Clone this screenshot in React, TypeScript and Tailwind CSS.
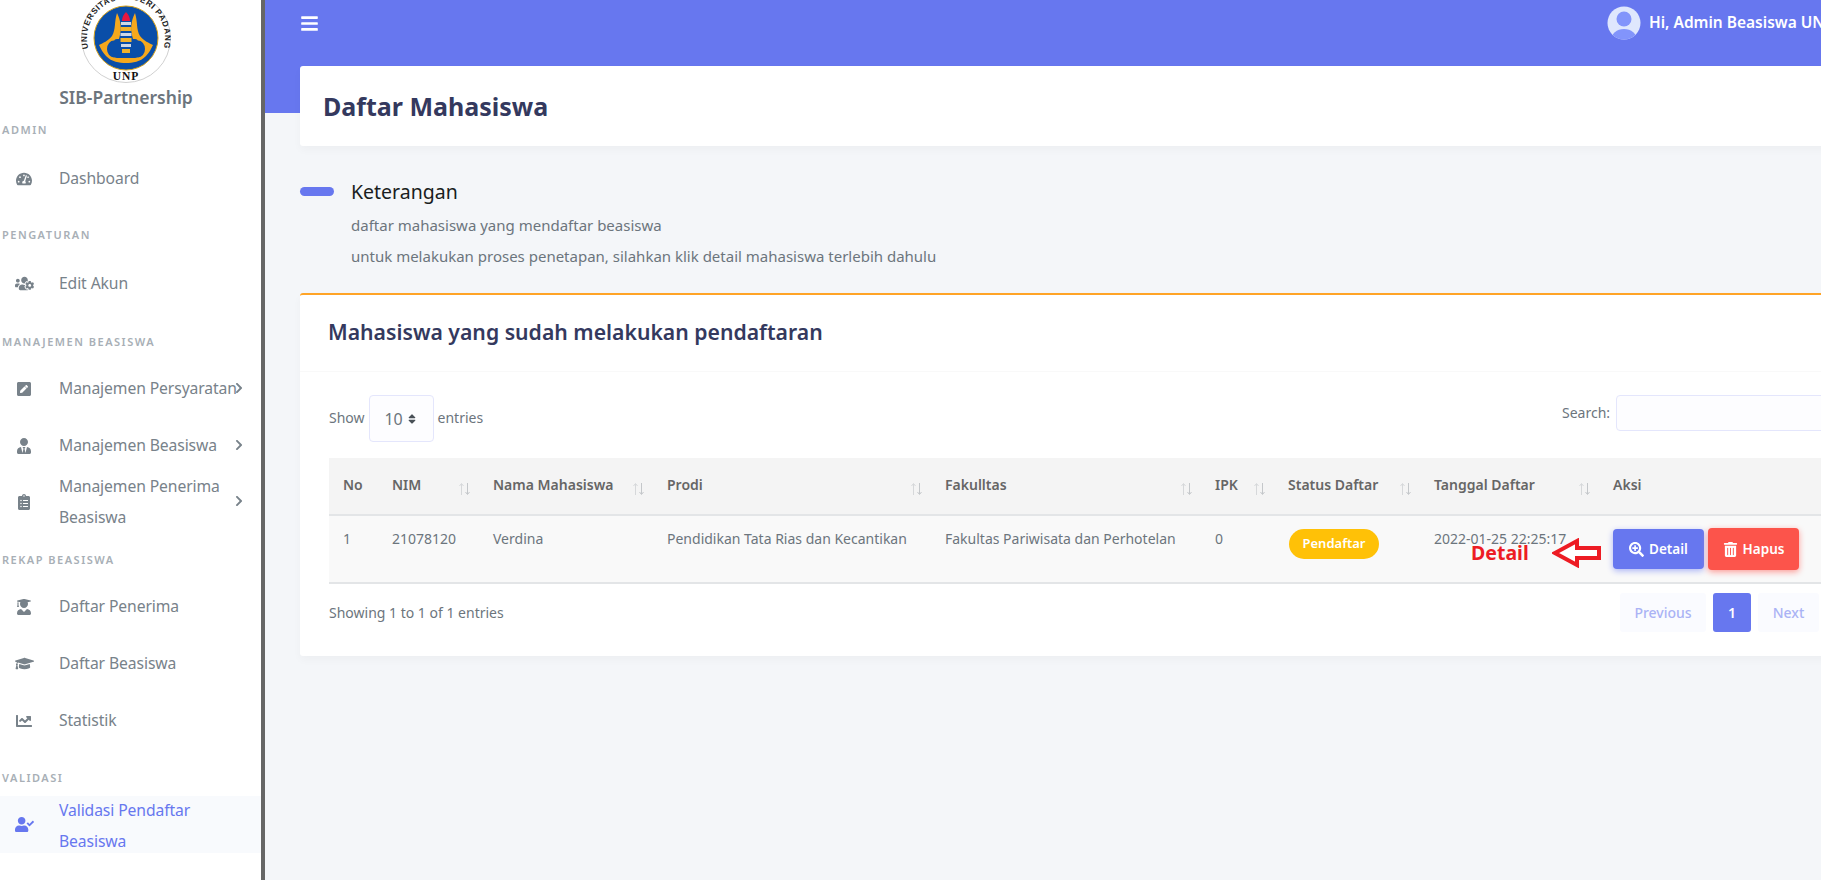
import React from 'react';
import {
  FaBars,
  FaChartLine,
  FaChevronRight,
  FaClipboardList,
  FaGraduationCap,
  FaPenSquare,
  FaSearchPlus,
  FaSort,
  FaTachometerAlt,
  FaTrashAlt,
  FaUserCheck,
  FaUserGraduate,
  FaUsersCog,
  FaUserTie,
} from 'react-icons/fa';

const font = "font-['Noto_Sans','Open_Sans',sans-serif]";

/* ---------- drawings ---------- */

const UnpLogo = () => (
  <svg width="90" height="90" viewBox="0 0 90 90" className="-mt-[7px] block shrink-0">
    <defs>
      <path id="ring-top" d="M12 66a39 39 0 1 1 66 0" />
    </defs>
    <circle cx="45" cy="45" r="44.5" fill="#fff" stroke="#c4c4c4" strokeWidth="0.8" />
    <circle cx="45" cy="45" r="32" fill="#0a4ea8" />
    <circle cx="45" cy="45" r="32" fill="none" stroke="#d8a21a" strokeWidth="1" />
    <text fontFamily="'Liberation Sans', sans-serif" fontSize="8.2" fontWeight="700" fill="#222" letterSpacing="0.7">
      <textPath href="#ring-top" startOffset="50%" textAnchor="middle">
        UNIVERSITAS NEGERI PADANG
      </textPath>
    </text>
    <text x="45" y="87" textAnchor="middle" fontFamily="'Liberation Serif', serif" fontSize="11.5" fontWeight="700" fill="#111" letterSpacing="1">
      UNP
    </text>
    {/* flames */}
    <path
      d="M36 20C33 30 35 36 31 43 27 48 22 50 18 52 20 56 22 60 25 63 31 69 38 70 45 70 52 70 59 69 65 63 68 60 70 56 72 52 68 50 63 48 59 43 55 36 57 30 54 20 50 28 49 36 52 46H38C41 36 40 28 36 20Z"
      fill="#f6a81c"
    />
    {/* lobes */}
    <ellipse cx="33" cy="56" rx="7" ry="8.5" fill="#0a4ea8" />
    <ellipse cx="57" cy="56" rx="7" ry="8.5" fill="#0a4ea8" />
    <rect x="33" y="46" width="24" height="19" rx="3" fill="#0a4ea8" />
    {/* tower */}
    <path d="M45 19c3 3 4 6 4 9h-8c0-3 1-6 4-9z" fill="#e8173f" />
    <rect x="40" y="29" width="10" height="3" fill="#cfd8e6" />
    <rect x="39.5" y="34" width="11" height="4" fill="#f3b22a" />
    <rect x="39.5" y="40" width="11" height="3" fill="#cfd8e6" />
    <rect x="39.5" y="45" width="11" height="4" fill="#f3b22a" />
    <rect x="40" y="51" width="10" height="3" fill="#cfd8e6" />
    <rect x="41" y="56" width="8" height="4" fill="#f3b22a" />
  </svg>
);

const Avatar = () => (
  <svg width="34" height="34" viewBox="0 0 34 34" className="shrink-0">
    <clipPath id="avatar-clip">
      <circle cx="17" cy="17" r="16.5" />
    </clipPath>
    <g clipPath="url(#avatar-clip)">
      <rect width="34" height="34" fill="#dfe7fd" />
      <circle cx="17" cy="13" r="7.5" fill="#8294fb" />
      <ellipse cx="17" cy="34" rx="13" ry="11" fill="#8294fb" />
    </g>
  </svg>
);

const RedArrow = () => (
  <svg width="50" height="30" viewBox="0 0 50 30" className="absolute left-[1552px] top-[538px]">
    <path d="M3 15 25 3v7h22v10H25v7z" fill="#fff" stroke="#ed1c24" strokeWidth="4" />
  </svg>
);

const SortArrows = () => (
  <svg width="13" height="14" viewBox="0 0 13 14" className="absolute right-[8px] top-[24px]" fill="none" stroke="#d6d8da" strokeWidth="1">
    <path d="M3.5 13V2M1.5 4l2-2.5 2 2.5" />
    <path d="M9.5 1v11M7.5 10l2 2.5 2-2.5" stroke="#c4c7ca" />
  </svg>
);

/* ---------- sidebar ---------- */

const Label = ({ children, low, short }: { children: string; low?: boolean; short?: boolean }) => (
  <div className={`flex ${short ? 'h-[47px]' : 'h-[48px]'} items-end ${low ? 'pb-[10px]' : 'pb-3'} pl-[2px]`}>
    <span className="text-[11px] font-semibold leading-4 tracking-[1.5px] text-[#a8afb6]">{children}</span>
  </div>
);

const Item = ({
  icon,
  children,
  arrow,
  active,
  tall,
}: {
  icon: React.ReactNode;
  children: React.ReactNode;
  arrow?: boolean;
  active?: boolean;
  tall?: boolean;
}) => (
  <div
    className={`flex ${tall ? 'h-[56px]' : 'h-[57px]'} items-center ${
      active ? 'bg-[#f8fafd] text-[#6777ef]' : 'text-[#78828a]'
    }`}
  >
    <span className="flex w-[59px] shrink-0 justify-center pr-[11px] text-[16px]">{icon}</span>
    <span className={`w-[174px] shrink-0 text-[15.7px] leading-[31px] tracking-[-0.1px] ${active ? 'pt-[2px]' : ''}`}>
      {children}
    </span>
    {arrow && <FaChevronRight className="mb-[2px] shrink-0 text-[12px]" />}
  </div>
);

const Sidebar = () => (
  <aside className="h-[880px] w-[265px] shrink-0 overflow-hidden border-r-4 border-[#666] bg-white">
    <div className="flex h-[102px] flex-col items-center pr-[9px]">
      <UnpLogo />
      <div className="pt-[1px] text-[17.5px] font-semibold leading-[26px] text-[#6c757d]">SIB-Partnership</div>
    </div>
    <Label>ADMIN</Label>
    <Item icon={<FaTachometerAlt />}>Dashboard</Item>
    <Label>PENGATURAN</Label>
    <Item icon={<FaUsersCog className="text-[19px]" />}>Edit Akun</Item>
    <Label low>MANAJEMEN BEASISWA</Label>
    <Item icon={<FaPenSquare />} arrow>
      <span className="whitespace-nowrap">Manajemen Persyaratan</span>
    </Item>
    <Item icon={<FaUserTie />} arrow>
      Manajemen Beasiswa
    </Item>
    <Item icon={<FaClipboardList />} arrow tall>
      Manajemen Penerima Beasiswa
    </Item>
    <Label low>REKAP BEASISWA</Label>
    <Item icon={<FaUserGraduate />}>Daftar Penerima</Item>
    <Item icon={<FaGraduationCap className="text-[19px]" />}>Daftar Beasiswa</Item>
    <Item icon={<FaChartLine />}>Statistik</Item>
    <Label low short>
      VALIDASI
    </Label>
    <Item icon={<FaUserCheck className="text-[19px]" />} active>
      Validasi Pendaftar Beasiswa
    </Item>
  </aside>
);

/* ---------- table ---------- */

const columns = [
  { title: 'No', w: 'w-[49px]' },
  { title: 'NIM', w: 'w-[101px]', sort: true },
  { title: 'Nama Mahasiswa', w: 'w-[174px]', sort: true },
  { title: 'Prodi', w: 'w-[278px]', sort: true },
  { title: 'Fakulltas', w: 'w-[270px]', sort: true },
  { title: 'IPK', w: 'w-[73px]', sort: true },
  { title: 'Status Daftar', w: 'w-[146px]', sort: true },
  { title: 'Tanggal Daftar', w: 'w-[179px]', sort: true },
  { title: 'Aksi', w: 'w-[230px]' },
];

const DataTable = () => (
  <table className="w-[1500px] table-fixed border-collapse text-[14px] text-[#6c757d]">
    <thead>
      <tr className="h-[57px] border-b-2 border-[#e3e5e7] bg-[#f4f4f4]">
        {columns.map((c) => (
          <th key={c.title} className={`relative ${c.w} pb-[4px] pl-[14px] text-left font-semibold text-[#666]`}>
            {c.title}
            {c.sort && <SortArrows />}
          </th>
        ))}
      </tr>
    </thead>
    <tbody>
      <tr className="h-[68px] border-b-2 border-[#e3e5e7] bg-[#f9f9f9]">
        <td className="pb-[21px] pl-[14px]">1</td>
        <td className="pb-[21px] pl-[14px]">21078120</td>
        <td className="pb-[21px] pl-[14px]">Verdina</td>
        <td className="pb-[21px] pl-[14px] whitespace-nowrap">Pendidikan Tata Rias dan Kecantikan</td>
        <td className="pb-[21px] pl-[14px] whitespace-nowrap">Fakultas Pariwisata dan Perhotelan</td>
        <td className="pb-[21px] pl-[14px]">0</td>
        <td className="pb-[11px] pl-[15px]">
          <span className="inline-flex h-[30px] w-[90px] items-center justify-center rounded-full bg-[#ffc107] text-[13px] font-semibold text-white">
            Pendaftar
          </span>
        </td>
        <td className="pb-[21px] pl-[14px] whitespace-nowrap">2022-01-25 22:25:17</td>
        <td className="pl-[14px]">
          <div className="flex items-center gap-[4px]">
            <button
              type="button"
              className="flex h-[40px] w-[91px] items-center justify-center gap-[5px] rounded-[4px] bg-[#6777ef] text-[13.5px] font-semibold text-white shadow-[0_2px_6px_#acb5f6]"
            >
              <FaSearchPlus className="text-[15px]" />
              Detail
            </button>
            <button
              type="button"
              className="flex h-[42px] w-[91px] items-center justify-center gap-[5px] rounded-[4px] bg-[#fc544b] text-[13.5px] font-semibold text-white shadow-[0_2px_6px_#fd9b96]"
            >
              <FaTrashAlt className="text-[15px]" />
              Hapus
            </button>
          </div>
        </td>
      </tr>
    </tbody>
  </table>
);

/* ---------- main ---------- */

const App: React.FC = () => (
  <div className={`flex h-[880px] w-full overflow-hidden bg-[#f4f6f9] ${font}`}>
    <Sidebar />
    <main className="relative min-w-0 flex-1 overflow-hidden">
      <div className="h-[113px] bg-[#6777ef]">
        <div className="flex h-[46px] items-center justify-between pl-[35px]">
          <FaBars className="text-[19px] text-white" />
          <div className="flex w-[214px] shrink-0 items-center gap-[8px] overflow-hidden whitespace-nowrap text-[15.5px] font-semibold text-white">
            <Avatar />
            Hi, Admin Beasiswa UNP
          </div>
        </div>
      </div>

      <div className="-mt-[47px] pl-[35px]">
        <div className="flex h-[80px] w-[1600px] items-center rounded-[3px] bg-white pl-[23px] pt-[2px] shadow-[0_4px_8px_rgba(0,0,0,0.03)]">
          <h1 className="text-[25px] font-bold text-[#34395e]">Daftar Mahasiswa</h1>
        </div>

        <div className="mt-[32px] flex h-[115px]">
          <span className="mt-[9px] h-[9px] w-[34px] rounded-full bg-[#6777ef]" />
          <div className="ml-[17px]">
            <div className="text-[19.5px] leading-[28px] text-[#191d21]">Keterangan</div>
            <p className="mt-[4px] text-[15px] leading-[31px] text-[#6c757d]">daftar mahasiswa yang mendaftar beasiswa</p>
            <p className="text-[15px] leading-[31px] text-[#6c757d]">
              untuk melakukan proses penetapan, silahkan klik detail mahasiswa terlebih dahulu
            </p>
          </div>
        </div>

        <section className="h-[363px] w-[1600px] rounded-[3px] border-t-2 border-[#ffa426] bg-white shadow-[0_4px_8px_rgba(0,0,0,0.03)]">
          <div className="flex h-[77px] items-center border-b border-[#f9f9f9] pb-[2px] pl-[28px]">
            <h2 className="text-[21.2px] font-semibold text-[#34395e]">Mahasiswa yang sudah melakukan pendaftaran</h2>
          </div>
          <div className="px-[29px]">
            <div className="flex h-[86px] items-start justify-between pt-[23px] text-[14px] text-[#6c757d]">
              <div className="flex items-center gap-[4px]">
                <span className="pb-[3px]">Show</span>
                <span className="flex h-[47px] w-[65px] items-center justify-center gap-[3px] rounded-[4px] border border-[#e4e6fc] bg-[#fdfdff] text-[16px]">
                  10
                  <FaSort className="text-[12px] text-[#495057]" />
                </span>
                <span className="pb-[3px]">entries</span>
              </div>
              <div className="mr-[5px] flex w-[304px] items-center gap-[6px]">
                <span className="pb-[2px]">Search:</span>
                <span className="h-[36px] flex-1 rounded-[4px] border border-[#e4e6fc] bg-[#fdfdff]" />
              </div>
            </div>
            <DataTable />
            <div className="mt-[9px] flex w-[1490px] items-start justify-between text-[14px] text-[#6c757d]">
              <div className="pt-[9px]">Showing 1 to 1 of 1 entries</div>
              <div className="flex gap-[7px] text-[14px] font-medium text-[#aab3f5]">
                <span className="flex h-[39px] w-[86px] items-center justify-center rounded-[3px] bg-[#fafbff]">Previous</span>
                <span className="flex h-[39px] w-[38px] items-center justify-center rounded-[3px] bg-[#6777ef] font-semibold text-white">1</span>
                <span className="flex h-[39px] w-[61px] items-center justify-center rounded-[3px] bg-[#fafbff]">Next</span>
              </div>
            </div>
          </div>
        </section>
      </div>
    </main>
    <RedArrow />
    <span className="absolute left-[1471px] top-[541px] text-[19.5px] font-bold leading-[24px] text-[#ed1c24]">Detail</span>
  </div>
);

export default App;
